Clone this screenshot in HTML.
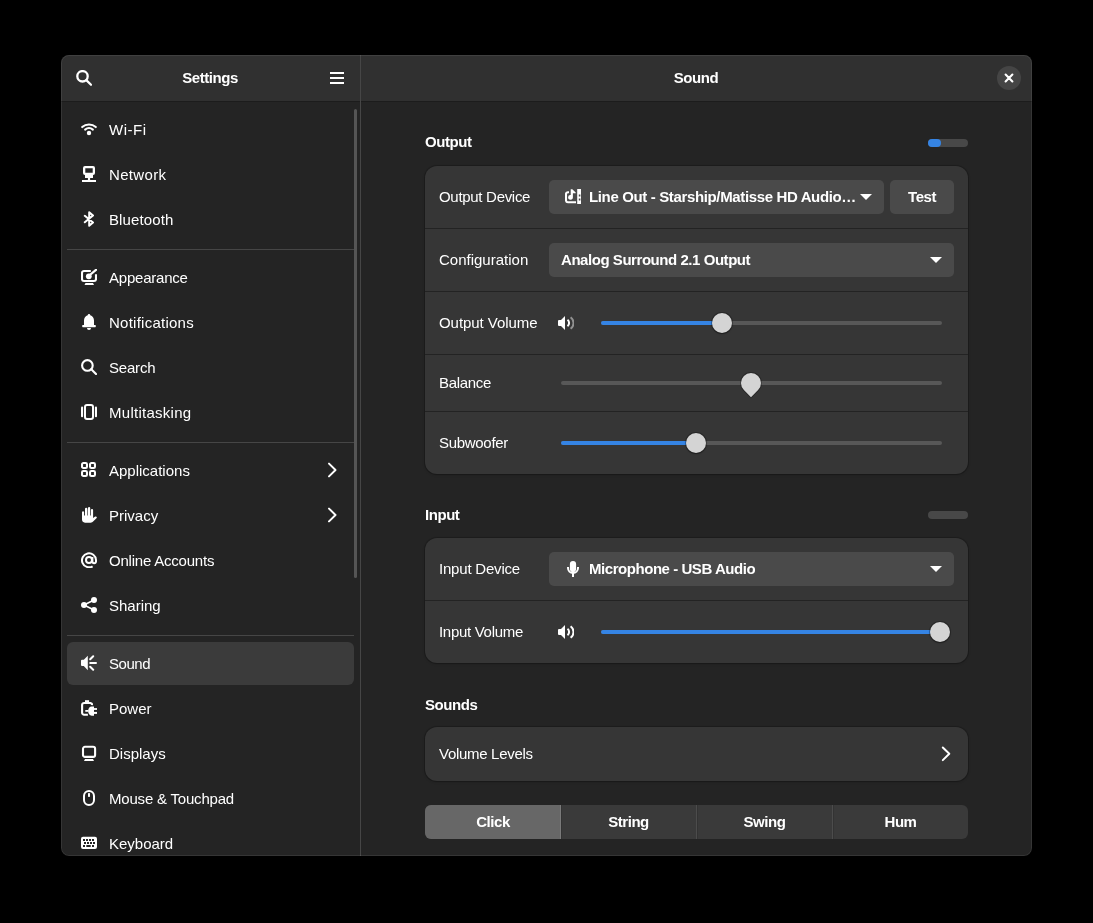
<!DOCTYPE html>
<html><head><meta charset="utf-8">
<style>
*{margin:0;padding:0;box-sizing:border-box}
html,body{width:1093px;height:923px;background:#000;overflow:hidden}
body{position:relative;font-family:"Liberation Sans",sans-serif;color:#fff}
.win{position:absolute;left:61px;top:55px;width:971px;height:801px;border-radius:8px;overflow:hidden;background:#242424}
.in{position:absolute;left:-61px;top:-55px;width:1093px;height:923px}
.a{position:absolute}
.t{position:absolute;white-space:nowrap;font-size:15px;line-height:17px;color:#fff;will-change:transform}
.b{font-weight:bold;letter-spacing:-0.45px}
.hdr{position:absolute;top:55px;height:46px;background:#303030}
.row{position:absolute;left:67px;width:287px;height:43px;border-radius:6px}
.sel{background:#3b3b3b}
.sep{position:absolute;left:67px;width:287px;height:1px;background:#464646}
.ic{position:absolute;width:16px;height:16px}
.card{position:absolute;left:425px;width:543px;background:#363636;border-radius:12px;box-shadow:0 0 0 1px rgba(0,0,0,0.18),0 1px 3px rgba(0,0,0,0.2)}
.rsep{position:absolute;left:425px;width:543px;height:1px;background:#232323}
.btn{position:absolute;height:34px;border-radius:5px;background:#4a4a4a}
.trough{position:absolute;height:4px;border-radius:2px;background:#585858}
.fill{position:absolute;height:4px;border-radius:2px;background:#3584e4}
.knob{position:absolute;width:20px;height:20px;border-radius:50%;background:#d4d4d4;box-shadow:0 0 0 1px rgba(0,0,0,0.25),0 1px 2px rgba(0,0,0,0.3)}
</style></head><body>
<div class="win"><div class="in">
  <!-- headers -->
  <div class="hdr" style="left:61px;width:299px"></div>
  <div class="hdr" style="left:361px;width:671px"></div>
  <div class="a" style="left:61px;top:101px;width:971px;height:1px;background:#1c1c1c"></div>
  <!-- divider -->
  <div class="a" style="left:360px;top:55px;width:1px;height:801px;background:#464646"></div>

  <!-- sidebar header -->
  <svg class="ic" style="left:76px;top:70px" viewBox="0 0 16 16"><circle cx="6.5" cy="6.3" r="5.2" fill="none" stroke="#fff" stroke-width="2.3"/><path d="M10.3 10.1L15 14.8" stroke="#fff" stroke-width="2.2" stroke-linecap="round"/></svg>
  <div class="t b" style="left:110px;top:69px;width:200px;text-align:center">Settings</div>
  <div class="a" style="left:330px;top:72px;width:14px;height:2px;background:#fff"></div>
  <div class="a" style="left:330px;top:77px;width:14px;height:2px;background:#fff"></div>
  <div class="a" style="left:330px;top:82px;width:14px;height:2px;background:#fff"></div>

  <!-- content header -->
  <div class="t b" style="left:596px;top:69px;width:200px;text-align:center">Sound</div>
  <div class="a" style="left:997px;top:66px;width:24px;height:24px;border-radius:50%;background:#454545"></div>
  <svg class="a" style="left:1001px;top:70px;width:16px;height:16px" viewBox="0 0 16 16"><path d="M4.6 4.6L11.4 11.4M11.4 4.6L4.6 11.4" stroke="#fff" stroke-width="2.1" stroke-linecap="round"/></svg>

  <!-- sidebar -->
  <div class="t" style="left:109px;top:121px;letter-spacing:0.5px">Wi-Fi</div>
  <svg class="ic" style="left:81px;top:121px" viewBox="0 0 16 16"><g fill="none" stroke="#fff" stroke-width="2" stroke-linecap="round"><path d="M1.2 6.1A10 10 0 0 1 14.8 6.1"/><path d="M4.1 8.6A6.2 6.2 0 0 1 11.9 8.6"/></g><circle cx="8" cy="12" r="2.2" fill="#fff"/></svg>
  <div class="t" style="left:109px;top:166px;letter-spacing:0.33px">Network</div>
  <svg class="ic" style="left:81px;top:166px" viewBox="0 0 16 16"><path fill="#fff" fill-rule="evenodd" d="M4 0H12A2 2 0 0 1 14 2V7A2 2 0 0 1 12 9H4A2 2 0 0 1 2 7V2A2 2 0 0 1 4 0ZM4.3 2.3V6.7H11.7V2.3Z"/><rect x="4" y="9" width="8" height="3" fill="#fff"/><rect x="6.9" y="11" width="2.2" height="3.5" fill="#fff"/><rect x="1" y="14" width="14" height="2" fill="#fff"/></svg>
  <div class="t" style="left:109px;top:211px;letter-spacing:0.12px">Bluetooth</div>
  <svg class="ic" style="left:81px;top:211px" viewBox="0 0 16 16"><path d="M3.8 4.8L12 11.5L8.2 14.8V1.2L12 4.5L3.8 11.3" fill="none" stroke="#fff" stroke-width="2" stroke-linejoin="round" stroke-linecap="round"/></svg>
  <div class="sep" style="top:249px"></div>

  <div class="t" style="left:109px;top:269px;letter-spacing:-0.22px">Appearance</div>
  <svg class="ic" style="left:81px;top:269px" viewBox="0 0 16 16"><path d="M9.8 2H3A2 2 0 0 0 1 4V10A2 2 0 0 0 3 12H13A2 2 0 0 0 15 10V5.2" fill="none" stroke="#fff" stroke-width="2.1"/><circle cx="7.8" cy="7.3" r="2.9" fill="#fff"/><path d="M10 5L15 0.8" stroke="#fff" stroke-width="2.2" stroke-linecap="square"/><path d="M3.5 16L4.5 14H12L13 16Z" fill="#fff"/></svg>
  <div class="t" style="left:109px;top:314px;letter-spacing:0.25px">Notifications</div>
  <svg class="ic" style="left:81px;top:314px" viewBox="0 0 16 16"><path fill="#fff" d="M8 0A1.3 1.3 0 0 1 9.3 1.2C11.6 1.9 13 3.9 13 6.5V11H14.2A0.6 0.6 0 0 1 14.8 11.6V12.6A0.6 0.6 0 0 1 14.2 13.2H1.8A0.6 0.6 0 0 1 1.2 12.6V11.6A0.6 0.6 0 0 1 1.8 11H3V6.5C3 3.9 4.4 1.9 6.7 1.2A1.3 1.3 0 0 1 8 0Z"/><path fill="#fff" d="M6 14H10A2 2 0 0 1 6 14Z"/></svg>
  <div class="t" style="left:109px;top:359px;letter-spacing:-0.2px">Search</div>
  <svg class="ic" style="left:81px;top:359px" viewBox="0 0 16 16"><circle cx="6.4" cy="6.4" r="5.3" fill="none" stroke="#fff" stroke-width="2.1"/><path d="M10.3 10.3L15 15" stroke="#fff" stroke-width="2.1" stroke-linecap="round"/></svg>
  <div class="t" style="left:109px;top:404px;letter-spacing:0.27px">Multitasking</div>
  <svg class="ic" style="left:81px;top:404px" viewBox="0 0 16 16"><rect x="4" y="1" width="8" height="14" rx="2" fill="none" stroke="#fff" stroke-width="2"/><rect x="0" y="2.6" width="2.1" height="10.6" rx="1" fill="#fff"/><rect x="13.9" y="2.6" width="2.1" height="10.6" rx="1" fill="#fff"/></svg>
  <div class="sep" style="top:442px"></div>

  <div class="t" style="left:109px;top:462px">Applications</div>
  <svg class="ic" style="left:81px;top:462px" viewBox="0 0 16 16"><g fill="none" stroke="#fff" stroke-width="2.1"><rect x="1.05" y="1.05" width="4.9" height="4.9" rx="1.3"/><rect x="9.05" y="1.05" width="4.9" height="4.9" rx="1.3"/><rect x="1.05" y="9.05" width="4.9" height="4.9" rx="1.3"/><rect x="9.05" y="9.05" width="4.9" height="4.9" rx="1.3"/></g></svg>
  <svg class="ic" style="left:324px;top:462px" viewBox="0 0 16 16"><path d="M5 1.6L11.5 8L5 14.4" fill="none" stroke="#fff" stroke-width="2" stroke-linecap="round" stroke-linejoin="round"/></svg>
  <div class="t" style="left:109px;top:507px">Privacy</div>
  <svg class="ic" style="left:324px;top:507px" viewBox="0 0 16 16"><path d="M5 1.6L11.5 8L5 14.4" fill="none" stroke="#fff" stroke-width="2" stroke-linecap="round" stroke-linejoin="round"/></svg>
  <svg class="ic" style="left:81px;top:507px" viewBox="0 0 16 16"><path fill="#fff" d="M1 4.9A1.1 1.1 0 0 1 3.1 4.9V8.4H4V1.9A1.2 1.2 0 0 1 6.4 1.9V8.4H7V1.1A1.1 1.1 0 0 1 9.2 1.1V8.4H9.9V3A1.1 1.1 0 0 1 12.1 3V11.1L14.2 9.6A1.1 1.1 0 0 1 15.7 11L12.4 14.3C11.6 15.2 10.9 15.7 9.5 15.7H4C2.2 15.7 1 14.4 1 12.6Z"/></svg>
  <div class="t" style="left:109px;top:552px;letter-spacing:-0.21px">Online Accounts</div>
  <svg class="ic" style="left:81px;top:552px" viewBox="0 0 16 16"><g fill="none" stroke="#fff" stroke-width="2"><path d="M11.6 14.3A7 7 0 1 1 15 8V9.5A1.8 1.8 0 0 1 11.4 9.5V5"/><circle cx="8" cy="8" r="3"/></g></svg>
  <div class="t" style="left:109px;top:597px">Sharing</div>
  <svg class="ic" style="left:81px;top:597px" viewBox="0 0 16 16"><g fill="#fff"><circle cx="3" cy="8" r="3"/><circle cx="13" cy="3" r="3"/><circle cx="13" cy="13" r="3"/></g><path d="M3 8L13 3M3 8L13 13" stroke="#fff" stroke-width="1.6"/></svg>
  <div class="sep" style="top:635px"></div>

  <div class="row sel" style="top:642px"></div>
  <div class="t" style="left:109px;top:655px;letter-spacing:-0.45px">Sound</div>
  <svg class="ic" style="left:81px;top:655px" viewBox="0 0 16 16"><path fill="#fff" d="M1 4.8H2.8L6.8 0.8V15.2L2.8 11H1A1 1 0 0 1 0 10V5.8A1 1 0 0 1 1 4.8Z"/><path d="M9.2 4.2L12.2 1.2M9.2 8H15M9.2 11.8L12.2 14.8" stroke="#fff" stroke-width="2" stroke-linecap="round"/></svg>
  <div class="t" style="left:109px;top:700px">Power</div>
  <svg class="ic" style="left:81px;top:700px" viewBox="0 0 16 16"><path d="M11 5.2A2 2 0 0 0 9.4 3H3.1A2 2 0 0 0 1.1 5V12.7A2 2 0 0 0 3.1 14.7H6.9" fill="none" stroke="#fff" stroke-width="2.1"/><rect x="4" y="0.2" width="4.1" height="2" fill="#fff"/><path fill="#fff" d="M13 6.4V15.7H10.7C8.6 15.7 7.1 13.6 7.1 11C7.1 8.5 8.6 6.4 10.7 6.4Z"/><rect x="12.5" y="8.1" width="3.5" height="1.8" fill="#fff"/><rect x="12.5" y="11.9" width="3.5" height="2" fill="#fff"/><rect x="4.3" y="10" width="3" height="1.8" fill="#fff"/></svg>
  <div class="t" style="left:109px;top:745px">Displays</div>
  <svg class="ic" style="left:81px;top:745px" viewBox="0 0 16 16"><rect x="2" y="1.8" width="12.1" height="10.1" rx="2" fill="none" stroke="#fff" stroke-width="2.1"/><path fill="#fff" d="M3 16L4 14H12L13 16Z"/></svg>
  <div class="t" style="left:109px;top:790px;letter-spacing:-0.2px">Mouse &amp; Touchpad</div>
  <svg class="ic" style="left:81px;top:790px" viewBox="0 0 16 16"><rect x="3" y="1" width="10" height="14" rx="5" fill="none" stroke="#fff" stroke-width="2"/><rect x="7" y="3" width="2" height="4" rx="0.8" fill="#fff"/></svg>
  <div class="t" style="left:109px;top:835px">Keyboard</div>
  <svg class="ic" style="left:81px;top:835px" viewBox="0 0 16 16"><path fill="#fff" fill-rule="evenodd" d="M2 1.8H14A2 2 0 0 1 16 3.8V12A2 2 0 0 1 14 14H2A2 2 0 0 1 0 12V3.8A2 2 0 0 1 2 1.8ZM2 4V6H4V4ZM5 4V6H7V4ZM8 4V6H10V4ZM11 4V6H13V4ZM3 7V9H5V7ZM6 7V9H8V7ZM9 7V9H11V7ZM12 7V9H14V7ZM2 10V12H4V10ZM5.3 10V12H9.7V10ZM11 10V12H13V10Z"/></svg>
  <div class="a" style="left:354px;top:109px;width:3px;height:469px;border-radius:2px;background:#555"></div>

  <!-- content -->
  <!-- Output -->
  <div class="t b" style="left:425px;top:133px">Output</div>
  <div class="a" style="left:928px;top:139px;width:40px;height:8px;border-radius:4px;background:#484848"></div>
  <div class="a" style="left:928px;top:139px;width:13px;height:8px;border-radius:4px;background:#3584e4"></div>
  <div class="card" style="top:166px;height:308px"></div>
  <div class="rsep" style="top:228px"></div>
  <div class="rsep" style="top:291px"></div>
  <div class="rsep" style="top:354px"></div>
  <div class="rsep" style="top:411px"></div>

  <div class="t" style="left:439px;top:188px;letter-spacing:-0.3px">Output Device</div>
  <div class="btn" style="left:549px;top:180px;width:335px"></div>
  <svg class="ic" style="left:565px;top:189px" viewBox="0 0 16 16"><path d="M4 3.2H3A2 2 0 0 0 1 5.2V11.2A2 2 0 0 0 3 13.2H11" fill="none" stroke="#fff" stroke-width="2.1"/><path fill="#fff" d="M5.7 0.2H7.3L10.7 3.6V4.2H7.9V8.3A2.4 2.4 0 1 1 5.7 6Z"/><path fill="#fff" fill-rule="evenodd" d="M12.2 0.1H16V14.9H12.2ZM13.8 5.6V7.4H15.4V5.6ZM13.8 9.6V11.4H15.4V9.6Z"/></svg>
  <div class="t b" style="left:589px;top:188px;letter-spacing:-0.36px">Line Out - Starship/Matisse HD Audio…</div>
  <svg class="a" style="left:860px;top:194px;width:12px;height:6px" viewBox="0 0 12 6"><path d="M0 0H12L6 6Z" fill="#fff"/></svg>
  <div class="btn" style="left:890px;top:180px;width:64px"></div>
  <div class="t b" style="left:890px;top:188px;width:64px;text-align:center">Test</div>

  <div class="t" style="left:439px;top:251px">Configuration</div>
  <div class="btn" style="left:549px;top:243px;width:405px"></div>
  <div class="t b" style="left:561px;top:251px">Analog Surround 2.1 Output</div>
  <svg class="a" style="left:930px;top:257px;width:12px;height:6px" viewBox="0 0 12 6"><path d="M0 0H12L6 6Z" fill="#fff"/></svg>

  <div class="t" style="left:439px;top:314px;letter-spacing:-0.05px">Output Volume</div>
  <svg class="ic" style="left:558px;top:315px" viewBox="0 0 16 16"><path fill="#fff" d="M1 5H3L7 1V15L3 11H1A1 1 0 0 1 0 10V6A1 1 0 0 1 1 5Z"/><path d="M9.5 4.8A4 4 0 0 1 9.5 11.2" fill="none" stroke="#fff" stroke-width="2"/><path d="M12.6 2.2A7.2 7.2 0 0 1 12.6 13.8" fill="none" stroke="#fff" stroke-opacity="0.45" stroke-width="2"/></svg>
  <div class="trough" style="left:601px;top:321px;width:341px"></div>
  <div class="fill" style="left:601px;top:321px;width:121px"></div>
  <div class="knob" style="left:712px;top:313px"></div>

  <div class="t" style="left:439px;top:374px;letter-spacing:-0.3px">Balance</div>
  <div class="trough" style="left:561px;top:381px;width:381px"></div>
  <div class="a" style="left:741px;top:373px;width:20px;height:20px;background:#d4d4d4;border-radius:50% 50% 0 50%;transform:rotate(45deg);box-shadow:0 0 0 1px rgba(0,0,0,0.25)"></div>

  <div class="t" style="left:439px;top:434px;letter-spacing:-0.3px">Subwoofer</div>
  <div class="trough" style="left:561px;top:441px;width:381px"></div>
  <div class="fill" style="left:561px;top:441px;width:135px"></div>
  <div class="knob" style="left:686px;top:433px"></div>

  <!-- Input -->
  <div class="t b" style="left:425px;top:506px">Input</div>
  <div class="a" style="left:928px;top:511px;width:40px;height:8px;border-radius:4px;background:#484848"></div>
  <div class="card" style="top:538px;height:125px"></div>
  <div class="rsep" style="top:600px"></div>
  <div class="t" style="left:439px;top:560px;letter-spacing:-0.2px">Input Device</div>
  <div class="btn" style="left:549px;top:552px;width:405px"></div>
  <svg class="ic" style="left:565px;top:561px" viewBox="0 0 16 16"><rect x="4.9" y="0" width="6.2" height="11" rx="3.1" fill="#fff"/><path d="M3 6V7A5 5 0 0 0 13 7V6" fill="none" stroke="#fff" stroke-width="2"/><rect x="7" y="12" width="2" height="4" fill="#fff"/></svg>
  <div class="t b" style="left:589px;top:560px">Microphone - USB Audio</div>
  <svg class="a" style="left:930px;top:566px;width:12px;height:6px" viewBox="0 0 12 6"><path d="M0 0H12L6 6Z" fill="#fff"/></svg>

  <div class="t" style="left:439px;top:623px;letter-spacing:-0.3px">Input Volume</div>
  <svg class="ic" style="left:558px;top:624px" viewBox="0 0 16 16"><path fill="#fff" d="M1 5H3L7 1V15L3 11H1A1 1 0 0 1 0 10V6A1 1 0 0 1 1 5Z"/><path d="M9.5 4.8A4 4 0 0 1 9.5 11.2" fill="none" stroke="#fff" stroke-width="2"/><path d="M12.6 2.2A7.2 7.2 0 0 1 12.6 13.8" fill="none" stroke="#fff" stroke-width="2"/></svg>
  <div class="trough" style="left:601px;top:630px;width:341px"></div>
  <div class="fill" style="left:601px;top:630px;width:339px"></div>
  <div class="knob" style="left:930px;top:622px"></div>

  <!-- Sounds -->
  <div class="t b" style="left:425px;top:696px">Sounds</div>
  <div class="card" style="top:727px;height:54px"></div>
  <div class="t" style="left:439px;top:745px;letter-spacing:-0.3px">Volume Levels</div>
  <svg class="ic" style="left:937px;top:746px" viewBox="0 0 16 16"><path d="M5.8 1.5L12.3 7.8L5.8 14.1" fill="none" stroke="#fff" stroke-width="2" stroke-linecap="round" stroke-linejoin="round"/></svg>

  <div class="a" style="left:425px;top:805px;width:543px;height:34px;border-radius:6px;background:#3a3a3a;overflow:hidden">
    <div class="a" style="left:0;top:0;width:136px;height:34px;background:#676767"></div>
    <div class="a" style="left:135px;top:0;width:1px;height:34px;background:#7a7a7a"></div>
    <div class="a" style="left:136px;top:0;width:1px;height:34px;background:#333"></div>
    <div class="a" style="left:271px;top:0;width:1px;height:34px;background:#4c4c4c"></div>
    <div class="a" style="left:272px;top:0;width:1px;height:34px;background:#333"></div>
    <div class="a" style="left:407px;top:0;width:1px;height:34px;background:#4c4c4c"></div>
    <div class="a" style="left:408px;top:0;width:1px;height:34px;background:#333"></div>
  </div>
  <div class="t b" style="left:425px;top:813px;width:136px;text-align:center">Click</div>
  <div class="t b" style="left:561px;top:813px;width:135px;text-align:center">String</div>
  <div class="t b" style="left:697px;top:813px;width:135px;text-align:center">Swing</div>
  <div class="t b" style="left:833px;top:813px;width:135px;text-align:center">Hum</div>

  <!-- window border -->
</div>
<div class="a" style="left:0;top:0;width:971px;height:801px;border-radius:8px;border:1px solid rgba(255,255,255,0.08);pointer-events:none"></div>
</div>
</body></html>
